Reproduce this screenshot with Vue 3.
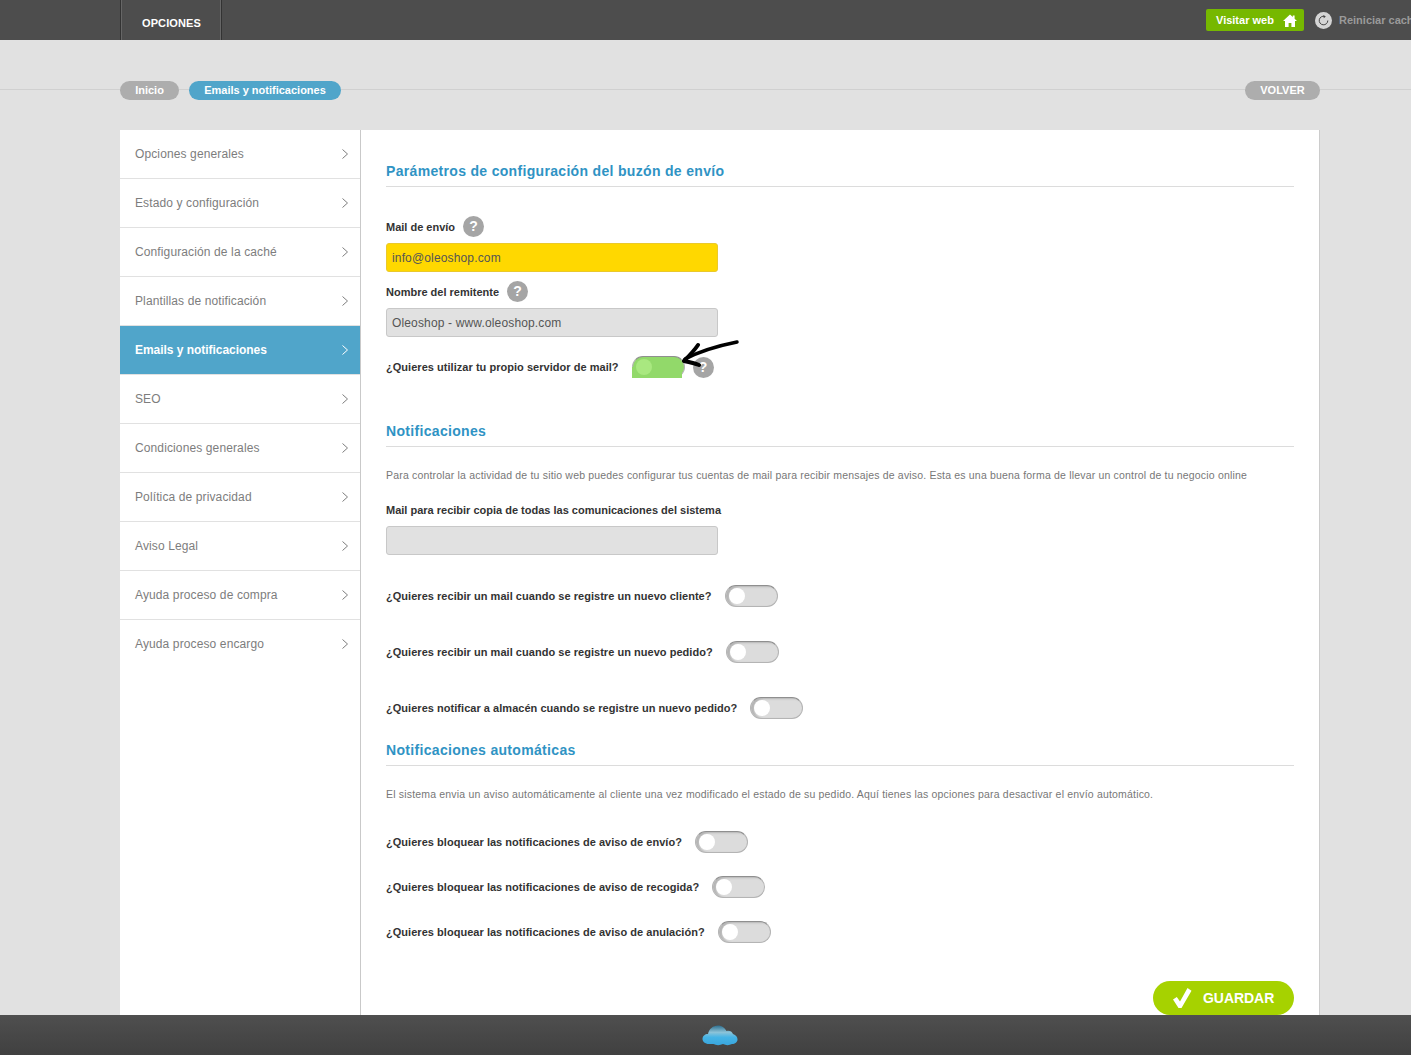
<script setup>
const menuItems = [
  { label: 'Opciones generales' },
  { label: 'Estado y configuración' },
  { label: 'Configuración de la caché' },
  { label: 'Plantillas de notificación' },
  { label: 'Emails y notificaciones', active: true },
  { label: 'SEO' },
  { label: 'Condiciones generales' },
  { label: 'Política de privacidad' },
  { label: 'Aviso Legal' },
  { label: 'Ayuda proceso de compra' },
  { label: 'Ayuda proceso encargo' },
]

const notifyToggles = [
  '¿Quieres recibir un mail cuando se registre un nuevo cliente?',
  '¿Quieres recibir un mail cuando se registre un nuevo pedido?',
  '¿Quieres notificar a almacén cuando se registre un nuevo pedido?',
]

const blockToggles = [
  '¿Quieres bloquear las notificaciones de aviso de envío?',
  '¿Quieres bloquear las notificaciones de aviso de recogida?',
  '¿Quieres bloquear las notificaciones de aviso de anulación?',
]
</script>

<template>
  <div class="page">
    <header class="topbar">
      <div class="topbar__tab">OPCIONES</div>
      <div class="topbar__right">
        <a class="visit-btn">
          Visitar web
          <svg width="14" height="13" viewBox="0 0 14 13" aria-hidden="true">
            <path d="M7 .5 0 7h2v6h3.600V9h2.800v4H12V7h2l-2.400-2.200V1.400h-1.800v1.700z" fill="#fff" />
          </svg>
        </a>
        <span class="reset-icon">
          <svg width="11" height="11" viewBox="0 0 11 11" fill="none" aria-hidden="true">
            <path d="M6.700 1.400A4.300 4.300 0 1 0 9.800 5.500" stroke="#444" stroke-width="1" />
            <path d="M5.300.1 7.800 1.500 5.800 3.200z" fill="#444" />
          </svg>
        </span>
        <span class="reset-label">Reiniciar caché</span>
      </div>
    </header>

    <nav class="crumbs">
      <div class="crumbs__left">
        <span class="pill pill--gray">Inicio</span>
        <span class="pill pill--blue">Emails y notificaciones</span>
      </div>
      <span class="pill pill--gray pill--back">VOLVER</span>
    </nav>

    <main class="card">
      <aside class="sidebar">
        <a
          v-for="item in menuItems"
          :key="item.label"
          class="menu-item"
          :class="{ 'menu-item--active': item.active }"
        >
          <span>{{ item.label }}</span>
          <svg width="6" height="10" viewBox="0 0 6 10" fill="none" aria-hidden="true">
            <path d="M.5.500 5.500 5 .5 9.500" stroke="currentColor" stroke-width="1" />
          </svg>
        </a>
      </aside>

      <section class="content">
        <h2 class="section-title section-title--first">Parámetros de configuración del buzón de envío</h2>

        <div class="field-label field-label--first">
          <span>Mail de envío</span>
          <span class="help">?</span>
        </div>
        <div class="input input--yellow">info@oleoshop.com</div>

        <div class="field-label field-label--second">
          <span>Nombre del remitente</span>
          <span class="help">?</span>
        </div>
        <div class="input">Oleoshop - www.oleoshop.com</div>

        <div class="toggle-row toggle-row--own">
          <span>¿Quieres utilizar tu propio servidor de mail?</span>
          <span class="switch switch--on"><span class="switch__knob"></span></span>
          <span class="help help--small">?</span>
          <svg class="scribble" width="60" height="32" viewBox="0 0 60 32" fill="none" aria-hidden="true">
            <path d="M55 4C40 7 20 12 3 21" stroke="#000" stroke-width="3.500" stroke-linecap="round" />
            <path d="M16 7C12 13 8 17 2 23 7 24 12 25 17 27" stroke="#000" stroke-width="4" stroke-linecap="round" stroke-linejoin="round" />
          </svg>
        </div>

        <h2 class="section-title">Notificaciones</h2>
        <p class="note note--notify">
          Para controlar la actividad de tu sitio web puedes configurar tus cuentas de mail para recibir mensajes de aviso. Esta es una buena forma de llevar un control de tu negocio online
        </p>
        <div class="field-label field-label--copy">
          <span>Mail para recibir copia de todas las comunicaciones del sistema</span>
        </div>
        <div class="input"></div>

        <div class="toggle-list toggle-list--notify">
          <div v-for="text in notifyToggles" :key="text" class="toggle-row">
            <span>{{ text }}</span>
            <span class="switch"><span class="switch__knob"></span></span>
          </div>
        </div>

        <h2 class="section-title">Notificaciones automáticas</h2>
        <p class="note note--auto">
          El sistema envia un aviso automáticamente al cliente una vez modificado el estado de su pedido. Aquí tienes las opciones para desactivar el envío automático.
        </p>

        <div class="toggle-list toggle-list--block">
          <div v-for="text in blockToggles" :key="text" class="toggle-row">
            <span>{{ text }}</span>
            <span class="switch"><span class="switch__knob"></span></span>
          </div>
        </div>

        <div class="actions">
          <button type="button" class="save-btn">
            <svg width="19" height="20" viewBox="0 0 19 20" aria-hidden="true">
              <path d="M0 11.500 3.800 9 7 13.500 14.500 0 18.500 2.800 8.500 20H5.500z" fill="#fff" />
            </svg>
            GUARDAR
          </button>
        </div>
      </section>
    </main>

    <footer class="footer">
      <svg width="36" height="22" viewBox="0 0 36 22" aria-hidden="true">
        <defs>
          <linearGradient id="cloud" x1="0" y1="0" x2="0" y2="1">
            <stop offset="0" stop-color="#2f6f8f" />
            <stop offset="0.35" stop-color="#8cc3d8" />
            <stop offset="0.6" stop-color="#45b4e6" />
            <stop offset="1" stop-color="#3aa5dc" />
          </linearGradient>
        </defs>
        <path
          d="M7 20C3 20 .5 17.500.500 15 .5 12 3 10 6 10 7 5 11 1.500 16 1.500 20 1.500 23 4 24.500 7 27 6 30 7 31 10 34 11 35.500 13 35.500 15.500 35.500 18 33 20 30 20 27 21.500 24 21.500 21 20 18 21.500 14 21.500 11.500 20Z"
          fill="url(#cloud)"
        />
      </svg>
    </footer>
  </div>
</template>

<style>
html,
body {
  margin: 0;
  background: #e1e1e1;
}
</style>

<style scoped>
.page {
  position: relative;
  height: 1055px;
  overflow: hidden;
  background: #e1e1e1;
  color: #333;
  font-family: 'Liberation Sans', Arial, sans-serif;
  font-size: 12px;
}

.topbar {
  display: flex;
  justify-content: space-between;
  height: 40px;
  padding-left: 120px;
  background: #4d4d4d;
}

.topbar__tab {
  box-sizing: content-box;
  width: 79px;
  height: 23px;
  padding: 17px 0 0 21px;
  border-left: 1px solid #333;
  border-right: 1px solid #333;
  box-shadow: inset 1px 0 0 #666, inset -1px 0 0 #666;
  color: #fff;
  font-size: 11px;
  font-weight: 700;
  letter-spacing: 0.1px;
  line-height: 13px;
}

.topbar__right {
  display: flex;
  align-items: center;
  width: 205px;
  white-space: nowrap;
  overflow: hidden;
}

.visit-btn {
  display: flex;
  flex: none;
  align-items: center;
  gap: 9px;
  box-sizing: border-box;
  width: 98px;
  height: 22px;
  padding-left: 10px;
  border-radius: 2px;
  background: #76b800;
  color: #fff;
  font-size: 11px;
  font-weight: 700;
}

.reset-icon {
  display: flex;
  flex: none;
  align-items: center;
  justify-content: center;
  width: 17px;
  height: 17px;
  margin-left: 11px;
  border-radius: 50%;
  background: #d5d5d5;
}

.reset-label {
  margin-left: 7px;
  color: #9a9a9a;
  font-size: 11px;
  font-weight: 700;
}

.crumbs {
  display: flex;
  justify-content: space-between;
  align-items: center;
  height: 19px;
  margin-top: 41px;
  padding: 0 91px 0 120px;
  background: linear-gradient(#d0d0d0, #d0d0d0) 0 8px / 100% 1px no-repeat;
}

.crumbs__left {
  display: flex;
  gap: 10px;
}

.pill {
  display: block;
  height: 19px;
  border-radius: 10px;
  color: #fff;
  font-size: 11px;
  font-weight: 700;
  line-height: 18px;
  text-align: center;
}

.pill--gray {
  width: 59px;
  background: #adadad;
}

.pill--blue {
  width: 152px;
  background: #50a5ca;
}

.pill--back {
  width: 75px;
}

.card {
  display: flex;
  width: 1199px;
  height: 925px;
  margin: 30px 0 0 120px;
  background: #fff;
  box-shadow: 1px 0 0 #ccc;
}

.sidebar {
  flex: none;
  box-sizing: border-box;
  width: 241px;
  border-right: 1px solid #c9c9c9;
}

.menu-item {
  display: flex;
  align-items: center;
  justify-content: space-between;
  box-sizing: border-box;
  height: 49px;
  padding: 0 12px 0 15px;
  border-bottom: 1px solid #e1e1e1;
  color: #7d7d7d;
  font-size: 12px;
  letter-spacing: 0.12px;
}

.menu-item:last-child {
  border-bottom-color: transparent;
}

.menu-item--active {
  background: #50a5ca;
  color: #fff;
  font-weight: 700;
  letter-spacing: -0.04px;
}

.content {
  flex: 1;
  min-width: 0;
  padding: 0 25px;
}

.section-title {
  height: 22px;
  margin: 0;
  padding-bottom: 3px;
  border-bottom: 1px solid #dcdcdc;
  color: #2f93c4;
  font-size: 14px;
  font-weight: 700;
  letter-spacing: 0.32px;
  line-height: 20px;
}

.section-title--first {
  margin-top: 31px;
}

.field-label {
  display: flex;
  align-items: center;
  gap: 8px;
  height: 22px;
  color: #333;
  font-size: 11px;
  font-weight: 700;
}

.field-label--first {
  margin-top: 29px;
}

.field-label--first .help {
  margin-top: -2px;
}

.field-label--second {
  margin-top: 9px;
}

.field-label--second .help {
  margin-top: -2px;
}

.field-label--copy {
  margin-top: 17px;
}

.help {
  display: flex;
  flex: none;
  align-items: center;
  justify-content: center;
  width: 21px;
  height: 21px;
  border-radius: 50%;
  background: #a5a5a5;
  color: #fff;
  font-size: 14px;
  font-weight: 700;
}

.input {
  box-sizing: border-box;
  width: 332px;
  height: 29px;
  margin-top: 5px;
  padding-left: 5px;
  border: 1px solid #c8c8c8;
  border-radius: 3px;
  background: #e1e1e1;
  color: #555;
  font-size: 12px;
  letter-spacing: 0.15px;
  line-height: 28px;
}

.input--yellow {
  border-color: #eac92c;
  background: #ffd800;
}

.toggle-row {
  position: relative;
  display: flex;
  align-items: center;
  gap: 13px;
  height: 22px;
  color: #333;
  font-size: 11px;
  font-weight: 700;
  letter-spacing: 0.035px;
}

.toggle-row--own {
  margin-top: 19px;
  margin-bottom: 43px;
}

.switch {
  position: relative;
  display: block;
  flex: none;
  box-sizing: border-box;
  width: 53px;
  height: 22px;
  border: 1px solid #b4b4b4;
  border-top-color: #8f8f8f;
  border-radius: 11px;
  background: #dcdcdc;
  box-shadow: inset 3px 1px 2px #b5b5b5;
}

.switch__knob {
  position: absolute;
  top: 2px;
  left: 3px;
  width: 16px;
  height: 16px;
  border-radius: 50%;
  background: #fff;
}

.switch--on {
  background: #92d96a;
  box-shadow: none;
}

/* mancha verde pintada a mano: tapa la parte baja del interruptor */
.switch--on::after {
  content: '';
  position: absolute;
  left: -1px;
  right: 2px;
  bottom: -1px;
  height: 11px;
  background: #92d96a;
}

.switch--on .switch__knob {
  z-index: 1;
  background: #a9e880;
}

.help--small {
  margin-left: -5px;
}

/* flecha pintada a mano encima de la captura */
.scribble {
  position: absolute;
  left: 296px;
  top: -18px;
}

.note {
  margin: 0;
  color: #777;
  font-size: 10.500px;
  line-height: 13px;
  letter-spacing: 0.18px;
}

.note--notify {
  margin-top: 22px;
}

.note--auto {
  margin-top: 22px;
}

.toggle-list {
  display: flex;
  flex-direction: column;
}

.toggle-list--notify {
  gap: 34px;
  margin-top: 30px;
  margin-bottom: 21px;
}

.toggle-list--block {
  gap: 23px;
  margin-top: 30px;
}

.actions {
  display: flex;
  justify-content: flex-end;
  margin-top: 38px;
}

.save-btn {
  display: flex;
  align-items: center;
  gap: 11px;
  box-sizing: border-box;
  width: 141px;
  height: 34px;
  padding: 0 0 0 20px;
  border: none;
  border-radius: 17px;
  background: #a6d200;
  color: #fff;
  font-family: inherit;
  font-size: 14px;
  font-weight: 700;
  letter-spacing: -0.05px;
}

.footer {
  position: absolute;
  left: 0;
  right: 0;
  bottom: 0;
  display: flex;
  align-items: center;
  justify-content: center;
  box-sizing: border-box;
  height: 40px;
  padding-left: 29px;
  background: linear-gradient(#4f4f4f, #404040);
}
</style>
